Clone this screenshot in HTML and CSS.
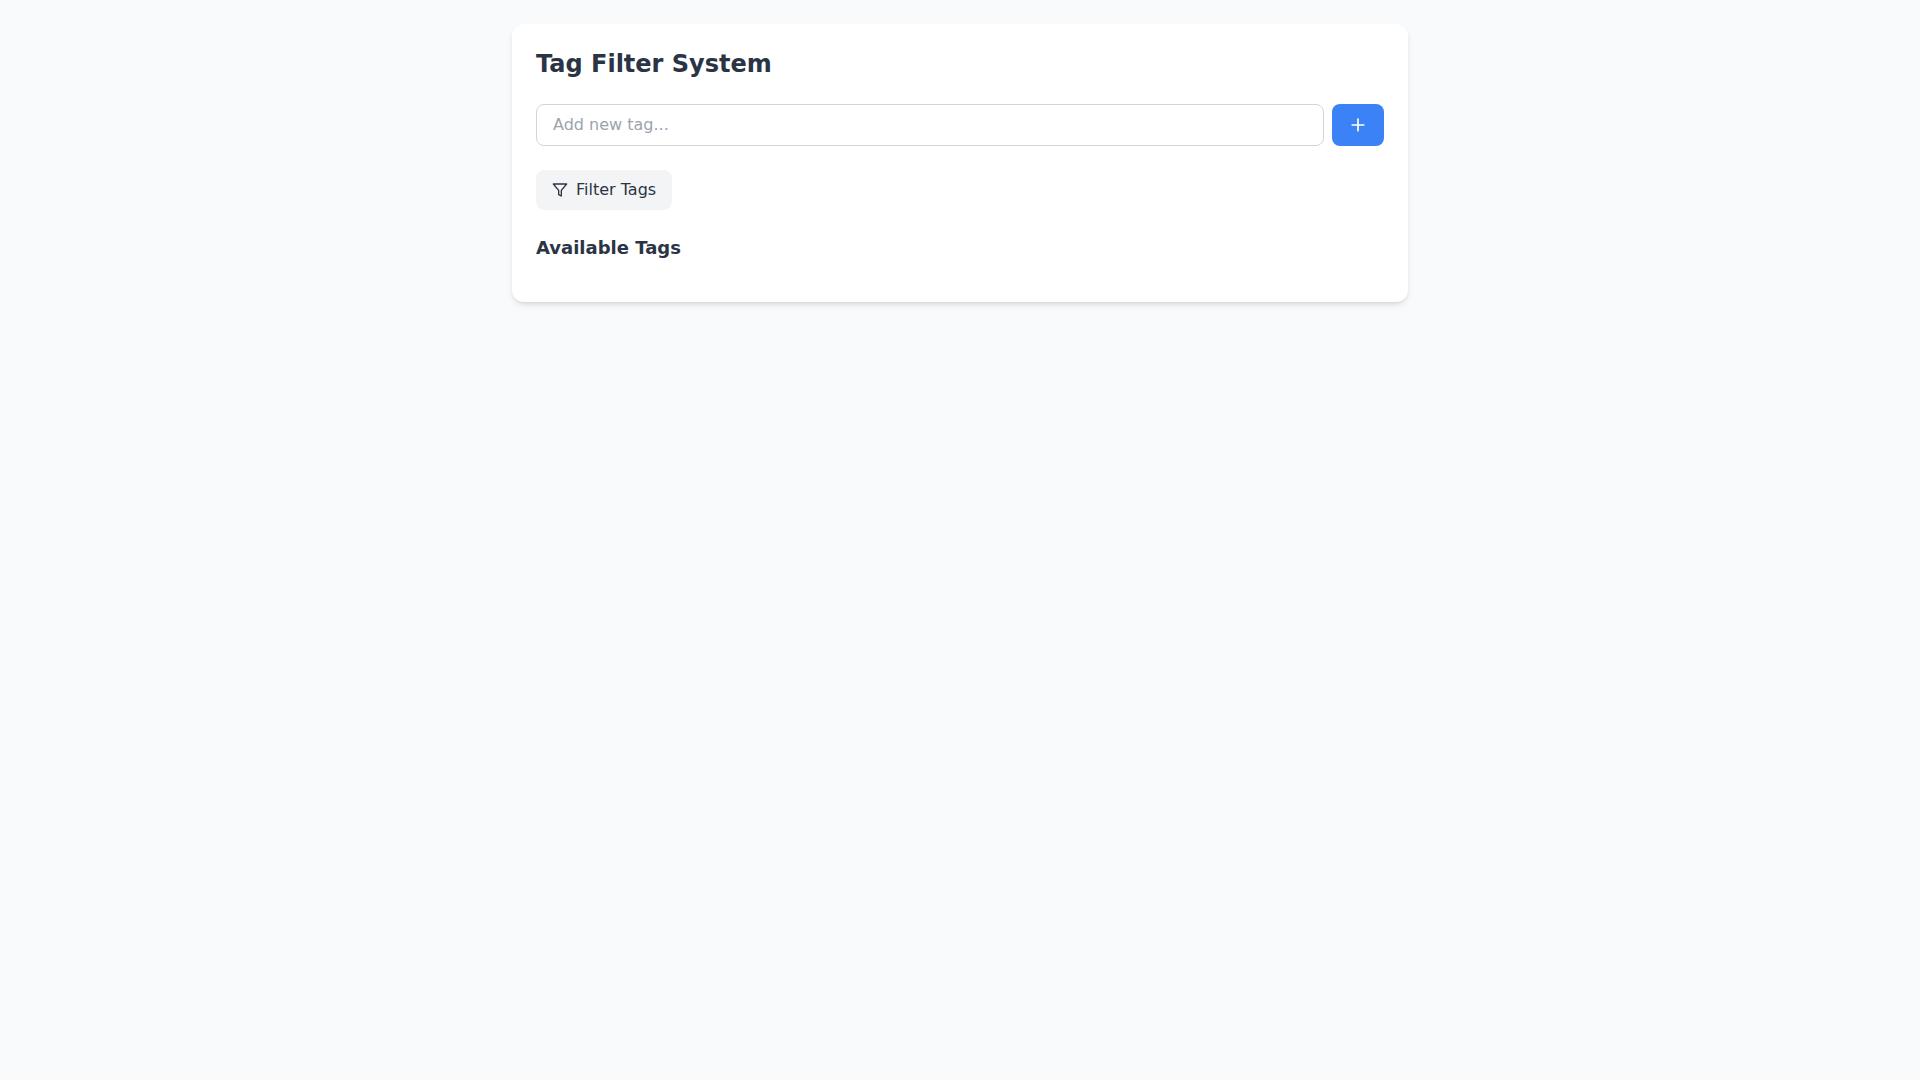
FILE: index.html
```html
<!DOCTYPE html>
<html lang="en">
<head>
    <meta charset="UTF-8">
    <meta name="viewport" content="width=device-width, initial-scale=1.0">
    <title>Tag Filter System</title>
    <link rel="stylesheet" href="styles.css">
</head>
<body>
    <main class="container">
        <h1>Tag Filter System</h1>
        <form class="tag-form" id="tagForm">
            <input type="text" id="tagInput" placeholder="Add new tag..." aria-label="Add new tag">
            <button type="submit" class="add-button" aria-label="Add tag">
                <svg class="icon" viewBox="0 0 24 24">
                    <path d="M5 12h14"/>
                    <path d="M12 5v14"/>
                </svg>
            </button>
        </form>
        <button type="button" class="filter-button">
            <svg class="icon" viewBox="0 0 24 24">
                <polygon points="22 3 2 3 10 12.46 10 19 14 21 14 12.46 22 3"/>
            </svg>
            Filter Tags
        </button>
        <section>
            <h2>Available Tags</h2>
            <div class="tag-list" id="tagList"></div>
        </section>
    </main>
    <script>
        document.getElementById('tagForm').addEventListener('submit', function(e) {
            e.preventDefault();
            const input = document.getElementById('tagInput');
            const name = input.value.trim();
            if (!name) return;
            const tag = document.createElement('span');
            tag.className = 'tag';
            tag.innerText = name;
            document.getElementById('tagList').appendChild(tag);
            input.value = '';
        });
    </script>
</body>
</html>
```
FILE: styles.css
```css
* {
    box-sizing: border-box;
}
body {
    margin: 0;
    padding: 24px;
    font-family: "DejaVu Sans", sans-serif;
    font-size: 16px;
    line-height: 24px;
    color: #2a3444;
    background-color: #f9fafb;
}
.container {
    max-width: 896px;
    margin: 0 auto;
    padding: 24px;
    background: white;
    border-radius: 12px;
    box-shadow: 0 4px 6px -1px rgba(0, 0, 0, 0.1), 0 2px 4px -2px rgba(0, 0, 0, 0.1);
}
h1 {
    margin: 0 0 24px;
    font-size: 24px;
    line-height: 32px;
}
h2 {
    margin: 0 0 16px;
    font-size: 18px;
    line-height: 28px;
}
input, button {
    font: inherit;
    color: inherit;
}
.tag-form {
    display: flex;
    gap: 8px;
    margin-bottom: 24px;
}
.tag-form input {
    flex: 1;
    min-width: 0;
    padding: 8px 16px;
    border: 1px solid #d1d5db;
    border-radius: 8px;
}
.tag-form input::placeholder {
    color: #9ca3af;
}
button {
    display: flex;
    align-items: center;
    gap: 8px;
    padding: 8px 16px;
    border: none;
    border-radius: 8px;
    cursor: pointer;
}
.add-button {
    background-color: #3b82f6;
    color: white;
}
.filter-button {
    margin-bottom: 24px;
    background-color: #f3f4f6;
}
.icon {
    width: 20px;
    height: 20px;
    fill: none;
    stroke: currentColor;
    stroke-width: 2;
    stroke-linecap: round;
    stroke-linejoin: round;
}
.filter-button .icon {
    width: 16px;
    height: 16px;
}
.tag-list {
    display: flex;
    flex-wrap: wrap;
    gap: 8px;
}
.tag {
    padding: 4px 12px;
    border-radius: 16px;
    background-color: #f3f4f6;
}
```
